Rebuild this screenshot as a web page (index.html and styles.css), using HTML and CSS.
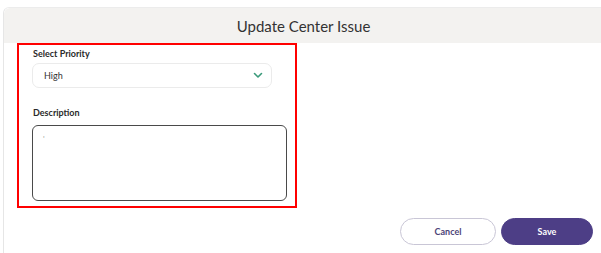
FILE: index.html
```html
<!DOCTYPE html>
<html>
  <head>
    <title>Update Center Issue</title>
    <link rel="stylesheet" href="styles.css">
  </head>
  <body>
    <div class="modal">
      <div class="modal-header">Update Center Issue</div>
      <div class="modal-body">
        <div class="highlight">
          <label class="field-label">Select Priority</label>
          <div class="select">
            <span>High</span>
            <svg class="chevron" width="10" height="7" viewBox="0 0 10 7">
              <path d="M1.5 1.5 L5 5 L8.5 1.5" fill="none" stroke="#3a9a7a" stroke-width="1.6" stroke-linecap="round" stroke-linejoin="round"/>
            </svg>
          </div>

          <label class="field-label desc-label">Description</label>
          <div class="textarea"><span class="caret">'</span></div>
        </div>
      </div>
      <div class="modal-footer">
        <button class="btn btn-cancel">Cancel</button>
        <button class="btn btn-save">Save</button>
      </div>
    </div>
  </body>
</html>
```
FILE: styles.css
```css
body {
  margin: 0;
  background: #ffffff;
  font-family: Lato, "Open Sans", sans-serif;
  color: #222;
}

.modal {
  margin: 7px 0 0 3px;
  height: 246px;
  border-left: 1px solid #e6e6e6;
  border-top: 1px solid #ececec;
  border-radius: 6px 0 0 0;
  display: flex;
  flex-direction: column;
}

.modal-header {
  height: 35px;
  background: #f3f2f0;
  display: flex;
  align-items: center;
  justify-content: center;
  font-size: 15px;
  color: #333;
  padding-left: 2px;
  border-radius: 6px 0 0 0;
}

.modal-body {
  padding-left: 13px;
}

.highlight {
  width: 276px;
  height: 161px;
  border: 2.5px solid #f00;
  display: flex;
  flex-direction: column;
}

.field-label {
  font-size: 9px;
  font-weight: bold;
  color: #2a2a2a;
  margin: 3px 0 0 14px;
  height: 11px;
}

.select {
  margin: 4px 0 0 13px;
  width: 240px;
  height: 25px;
  border: 1px solid #ebebeb;
  border-radius: 7px;
  display: flex;
  align-items: center;
  justify-content: space-between;
  padding: 0 8px 0 11px;
  box-sizing: border-box;
  font-size: 9px;
  color: #333;
}

.chevron {
  display: block;
}

.desc-label {
  margin-top: 19px;
}

.textarea {
  margin: 7px 0 0 13px;
  width: 255px;
  height: 76px;
  border: 1.5px solid #4a4a4a;
  border-radius: 6px;
  box-sizing: border-box;
  padding: 0 0 0 10px;
}

.caret {
  font-size: 8px;
  color: #999;
  line-height: 6px;
}

.modal-footer {
  display: flex;
  justify-content: flex-end;
  gap: 5px;
  padding: 10px 8px 0 0;
}

.btn {
  height: 27px;
  border-radius: 14px;
  font-family: Lato, "Open Sans", sans-serif;
  font-size: 9px;
  font-weight: bold;
  cursor: pointer;
}

.btn-cancel {
  width: 96px;
  background: #fff;
  border: 1.5px solid #c9c6d6;
  color: #4c4478;
}

.btn-save {
  width: 92px;
  background: #4d3e86;
  border: 1px solid #4d3e86;
  color: #fff;
}
```
